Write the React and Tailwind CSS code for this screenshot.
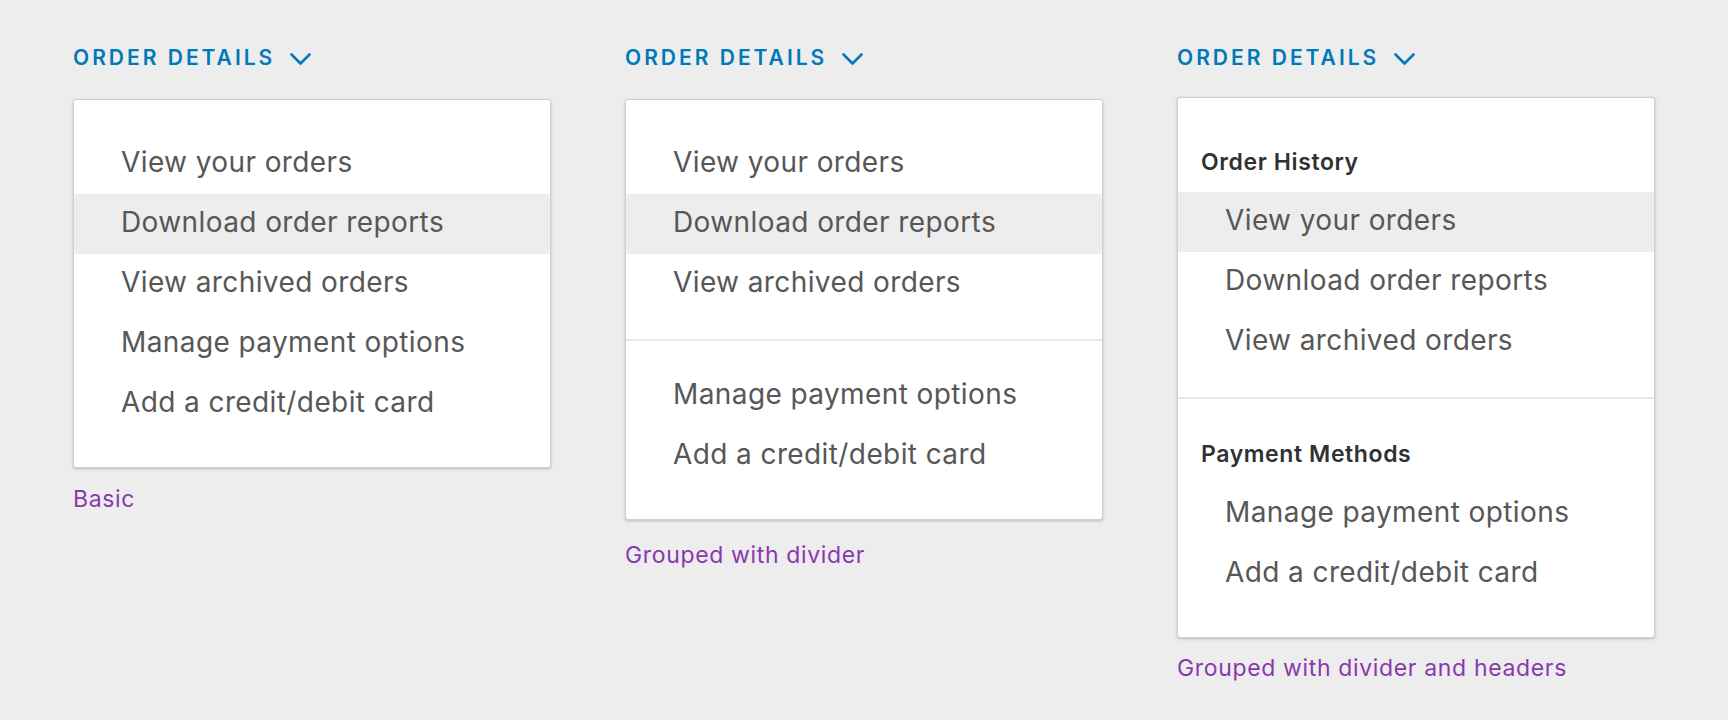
import React from 'react';

const groups = {
  basic: [
    ['View your orders', 'Download order reports', 'View archived orders', 'Manage payment options', 'Add a credit/debit card'],
  ],
  divided: [
    ['View your orders', 'Download order reports', 'View archived orders'],
    ['Manage payment options', 'Add a credit/debit card'],
  ],
};

const withHeaders = [
  { title: 'Order History', items: ['View your orders', 'Download order reports', 'View archived orders'] },
  { title: 'Payment Methods', items: ['Manage payment options', 'Add a credit/debit card'] },
];

const Chevron = () => (
  <svg width="21" height="14" viewBox="0 0 21 14" className="ml-[15px] mt-[1px]" fill="none">
    <path d="M1.5 2.5 L10.5 11.5 L19.5 2.5" stroke="#0079b8" strokeWidth="2.6" strokeLinecap="round" strokeLinejoin="round" />
  </svg>
);

const Trigger = () => (
  <button className="flex items-center text-[21px] leading-[28px] font-semibold tracking-[3px] text-[#0079b8] uppercase">
    Order details
    <Chevron />
  </button>
);

const Item = ({ label, active }) => (
  <div className={`h-[60px] pl-[47px] text-[28px] leading-[57px] tracking-[0.4px] text-[#575757] ${active ? 'bg-[#ededed]' : ''}`}>
    {label}
  </div>
);

const Header = ({ title }) => (
  <div className="h-[60px] pl-[23px] text-[23px] leading-[60px] tracking-[0.6px] font-semibold text-[#313131]">{title}</div>
);

const Divider = () => <div className="my-[25px] h-[2px] bg-[#e8e8e8]" />;

const Card = ({ children, className = '' }) => (
  <div className={`rounded-[3px] border border-[#cfcfcf] bg-white pt-[34px] pb-[33px] shadow-[0_1px_3px_rgba(0,0,0,0.22)] ${className}`}>
    {children}
  </div>
);

const Caption = ({ children, className = '' }) => (
  <p className={`text-[23px] leading-[28px] tracking-[0.65px] text-[#8939ad] ${className}`}>{children}</p>
);

export default function App() {
  return (
    <div className="min-h-screen bg-[#ededed] pl-[73px] pt-[44px] font-['Inter',sans-serif]">
      <div className="flex gap-[74px]">
        <div className="w-[478px]">
          <Trigger />
          <Card className="mt-[27px]">
            {groups.basic[0].map(label => (
              <Item key={label} label={label} active={label === 'Download order reports'} />
            ))}
          </Card>
          <Caption className="mt-[17px]">Basic</Caption>
        </div>

        <div className="w-[478px]">
          <Trigger />
          <Card className="mt-[27px]">
            {groups.divided.map((group, i) => (
              <div key={i}>
                {i > 0 && <Divider />}
                {group.map(label => (
                  <Item key={label} label={label} active={label === 'Download order reports'} />
                ))}
              </div>
            ))}
          </Card>
          <Caption className="mt-[21px]">Grouped with divider</Caption>
        </div>

        <div className="w-[478px]">
          <Trigger />
          <Card className="mt-[25px]">
            {withHeaders.map((group, i) => (
              <div key={group.title}>
                {i > 0 && <Divider />}
                <Header title={group.title} />
                {group.items.map(label => (
                  <Item key={label} label={label} active={i === 0 && label === 'View your orders'} />
                ))}
              </div>
            ))}
          </Card>
          <Caption className="mt-[16px]">Grouped with divider and headers</Caption>
        </div>
      </div>
    </div>
  );
}
